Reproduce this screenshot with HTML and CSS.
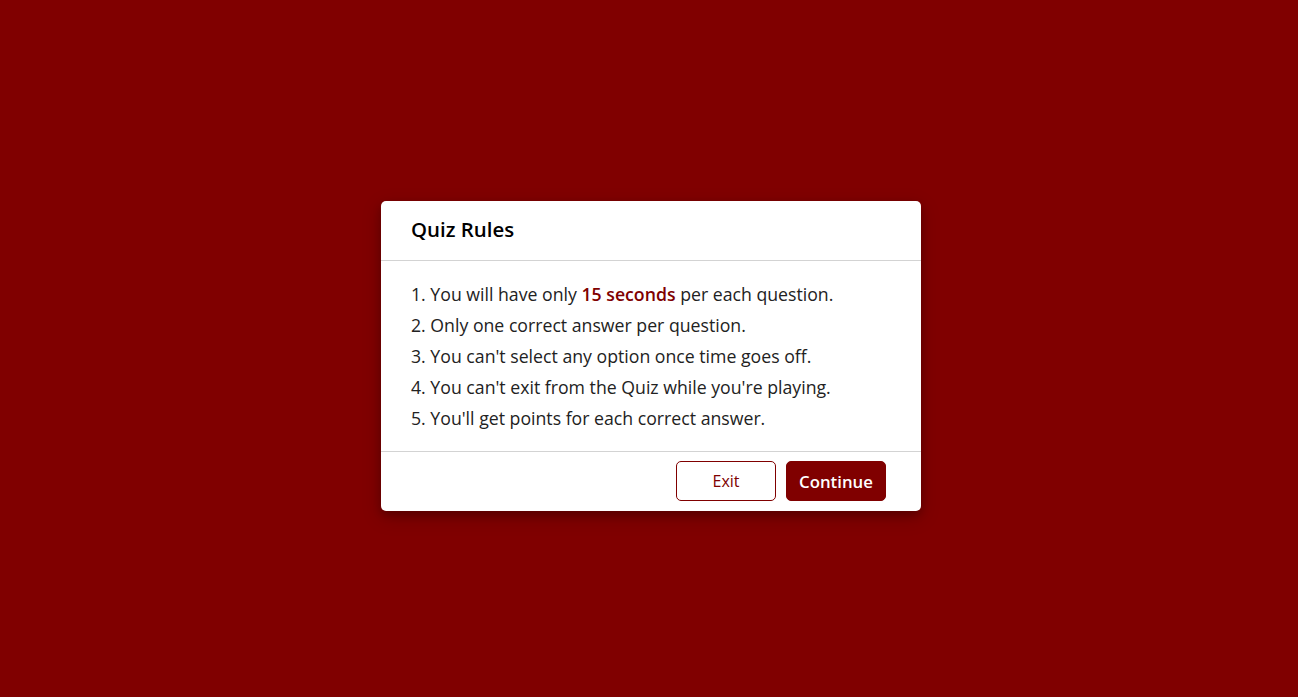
FILE: index.html
```html
<!DOCTYPE html>
<html lang="en">
<head>
<meta charset="utf-8">
<title>Quiz Rules</title>
<link rel="stylesheet" href="styles.css">
</head>
<body>
<div class="stage">
  <div class="info-box">
    <div class="info-title"><span>Quiz Rules</span></div>
    <div class="info-list">
      <div class="info">1. You will have only <span class="accent">15 seconds</span> per each question.</div>
      <div class="info">2. Only one correct answer per question.</div>
      <div class="info">3. You can't select any option once time goes off.</div>
      <div class="info">4. You can't exit from the Quiz while you're playing.</div>
      <div class="info">5. You'll get points for each correct answer.</div>
    </div>
    <div class="buttons">
      <button class="btn btn-quit">Exit</button>
      <button class="btn btn-restart">Continue</button>
    </div>
  </div>
</div>
</body>
</html>
```
FILE: styles.css
```css
* { margin: 0; padding: 0; box-sizing: border-box; }
html, body { height: 100%; }
body {
  background: #800000;
  font-family: "Open Sans", "Noto Sans", sans-serif;
}
.stage {
  height: 100%;
  display: flex;
  align-items: center;
  justify-content: center;
  padding: 15px 0 0 4px;
}
.info-box {
  width: 540px;
  background: #fff;
  border-radius: 5px;
  box-shadow: 0 4px 8px 0 rgba(0,0,0,0.2), 0 6px 20px 0 rgba(0,0,0,0.19);
}
.info-title {
  height: 60px;
  display: flex;
  align-items: center;
  padding: 0 30px 3px;
  border-bottom: 1px solid lightgrey;
  font-size: 20.4px;
  font-weight: 600;
  color: #000;
}
.info-list {
  padding: 15px 30px;
}
.info {
  margin: 5px 0;
  font-size: 17.7px;
  line-height: 26px;
  color: #222;
}
.accent { color: #800000; font-weight: 600; }
.buttons {
  height: 60px;
  display: flex;
  align-items: center;
  justify-content: flex-end;
  gap: 10px;
  padding: 0 35px 1px;
  border-top: 1px solid lightgrey;
}
.btn {
  width: 100px;
  height: 40px;
  border-radius: 5px;
  border: 1px solid #800000;
  font-family: inherit;
  font-size: 16px;
  cursor: pointer;
}
.btn-quit { background: #fff; color: #800000; font-weight: 500; }
.btn-restart { background: #800000; color: #fff; font-weight: 600; font-size: 16.8px; }
```
